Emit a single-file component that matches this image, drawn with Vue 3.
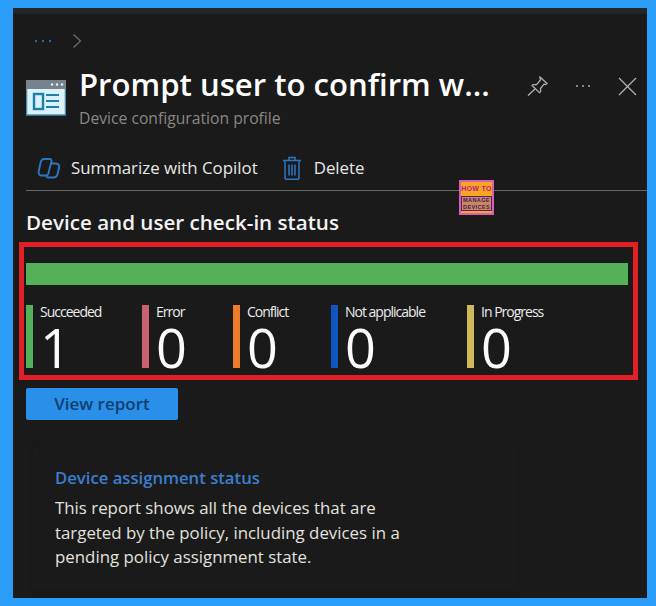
<script setup>
const stats = [
  { label: 'Succeeded', value: 1, color: '#55b05a', width: 116 },
  { label: 'Error', value: 0, color: '#c9616f', width: 91 },
  { label: 'Conflict', value: 0, color: '#ee7a2c', width: 98 },
  { label: 'Not applicable', value: 0, color: '#0f56c0', width: 136 },
  { label: 'In Progress', value: 0, color: '#d0b95a', width: 120 }
]
</script>

<template>
  <div class="page">
    <div class="panel">
      <div class="crumbs">
        <svg width="20" height="6" viewBox="0 0 20 6" fill="#2a6aa8"><circle cx="2" cy="3" r="1.200"/><circle cx="9" cy="3" r="1.200"/><circle cx="16" cy="3" r="1.200"/></svg>
        <svg class="chev" width="10" height="16" viewBox="0 0 10 16"><path d="M1.500 1.500 8.500 8l-7 6.500" fill="none" stroke="#6f6f6f" stroke-width="1.200"/></svg>
      </div>

      <div class="header">
        <svg class="app-icon" width="40" height="36" viewBox="0 0 40 36">
          <rect x="0.500" width="39" height="35" fill="#d9f2fb"/>
          <rect x="0.500" width="39" height="9" fill="#77838c"/>
          <path d="M.5 9v26h39V9" fill="none" stroke="#4f8fa8" stroke-width="1.600"/>
          <circle cx="26" cy="4.500" r="1.200" fill="#eee"/><circle cx="31" cy="4.500" r="1.200" fill="#eee"/><circle cx="36" cy="4.500" r="1.200" fill="#eee"/>
          <rect x="8" y="14" width="9" height="15" fill="none" stroke="#1f7fa8" stroke-width="2.400"/>
          <path d="M20 15h13M20 21h13M20 27h13" stroke="#1f7fa8" stroke-width="2"/>
        </svg>
        <div class="titles">
          <h1>Prompt user to confirm w...</h1>
          <p>Device configuration profile</p>
        </div>
        <div class="actions">
          <svg class="pin" width="21" height="20" viewBox="0 0 21 20" fill="none" stroke="#b4b4b4" stroke-width="1.200"><path d="M13 1 20 7.500 18.500 8.500l-1.500-.3-3.500 4.300.2 3-1.200 1.200L5 9.500l1.200-1 3.300.2L13.500 4l-.4-1.500z"/><path d="M8 13 1 19.500"/></svg>
          <svg class="more" width="16" height="4" viewBox="0 0 16 4" fill="#a8a8a8"><circle cx="2" cy="2" r="1"/><circle cx="8" cy="2" r="1"/><circle cx="14" cy="2" r="1"/></svg>
          <svg width="19" height="19" viewBox="0 0 19 19"><path d="M1 1l17 17M18 1 1 18" stroke="#b4b4b4" stroke-width="1.200"/></svg>
        </div>
      </div>

      <div class="commands">
        <button class="cmd" type="button">
          <svg width="24" height="24" viewBox="0 0 24 24" fill="none" stroke="#2a78c4" stroke-width="1.900">
            <path d="M7 3h5.500c1.500 0 2.300 1 1.900 2.400l-3 12c-.4 1.400-1.500 2.100-3 2.100H5c-2.500 0-3.900-1.800-3.300-4.200L3.500 7C4 4.600 5 3 7 3z"/>
            <path d="M13 7.500h5.500c2.800 0 4.200 1.800 3.600 4.300l-1.600 6.500c-.6 2.200-2 3.200-4 3.200h-5c-1.500 0-2.300-1-2-2.400"/>
          </svg>
          Summarize with Copilot
        </button>
        <button class="cmd trash" type="button">
          <svg width="18" height="24" viewBox="0 0 18 24" fill="none" stroke="#2a78c4" stroke-width="1.500">
            <path d="M0 4.500h18M6 4.500V1.500h6v3M2 4.500v17.500c0 .8.500 1.200 1.200 1.200h11.600c.7 0 1.200-.4 1.200-1.200V4.500"/>
            <path d="M6 8.500v11M9 8.500v11M12 8.500v11"/>
          </svg>
          Delete
        </button>
      </div>

      <div class="badge" aria-label="How to Manage Devices">
        <span class="how">HOW TO</span>
        <span class="manage">MANAGE<br>DEVICES</span>
      </div>

      <div class="content">
        <h2>Device and user check-in status</h2>

        <section class="status">
          <div class="bar"></div>
          <div class="stats">
            <div v-for="s in stats" :key="s.label" class="stat" :style="{ width: s.width + 'px' }">
              <span class="swatch" :style="{ background: s.color }"></span>
              <div class="stat-text">
                <span class="label">{{ s.label }}</span>
                <span class="value">{{ s.value }}</span>
              </div>
            </div>
          </div>
        </section>

        <button class="primary" type="button">View report</button>

        <article class="card">
          <h3>Device assignment status</h3>
          <p>This report shows all the devices that are targeted by the policy, including devices in a pending policy assignment state.</p>
        </article>
      </div>
    </div>
  </div>
</template>

<style>
html, body { margin: 0; background: #2a9df8; }
</style>

<style scoped>
.page {
  box-sizing: border-box;
  width: 656px;
  height: 606px;
  padding: 8px 9px 8px 13px;
  background: #2a9df8;
  font-family: "Open Sans", "Noto Sans", sans-serif;
  overflow: hidden;
}
.panel {
  position: relative;
  height: 590px;
  box-sizing: border-box;
  background: #1a1a1a;
  border-top: 6px solid #24252a;
  overflow: hidden;
}
.crumbs {
  height: 40px;
  padding: 19px 0 0 21px;
  box-sizing: border-box;
  display: flex;
  align-items: flex-start;
  gap: 18px;
}
.crumbs > svg:first-child { margin-top: 5px; }
.header {
  display: flex;
  height: 72px;
  padding: 20px 0 0 13px;
  box-sizing: border-box;
}
.app-icon { margin-top: 6px; flex: none; }
.titles { margin-left: 13px; width: 440px; margin-top: -10px; }
h1 {
  margin: 0;
  color: #fff;
  font-size: 31.100px;
  line-height: 40px;
  font-weight: 600;
  white-space: nowrap;
}
.titles p {
  margin: 4px 0 0;
  color: #8b8785;
  font-size: 15.700px;
  line-height: 20px;
  white-space: nowrap;
}
.actions {
  position: absolute;
  top: 63px;
  right: 10px;
  display: flex;
  align-items: center;
  gap: 27px;
}
.pin { margin-top: -2px; }
.more { margin-top: -1px; }
.commands {
  height: 65px;
  margin-left: 13px;
  padding: 20px 0 0 11px;
  box-sizing: border-box;
  display: flex;
  align-items: center;
  gap: 25px;
  border-bottom: 1px solid #666;
}
.cmd {
  display: flex;
  align-items: center;
  gap: 10px;
  padding: 0;
  border: 0;
  background: none;
  color: #e8e8e8;
  font: 400 16.850px/24px "Open Sans", "Noto Sans", sans-serif;
  white-space: nowrap;
}
.trash { gap: 13px; }
.badge {
  position: absolute;
  left: 446px;
  top: 166px;
  width: 35px;
  height: 35px;
  box-sizing: border-box;
  border: 2px solid #d65fb4;
  background: #f5a623;
  text-align: center;
  overflow: hidden;
  font-family: "Liberation Sans", sans-serif;
}
.how { display: block; color: #c2187f; font-size: 7px; line-height: 11px; font-weight: 700; letter-spacing: .3px; margin-top: 1px; }
.manage { display: block; margin-top: 2px; border: 1px solid #5a1a7a; background: #c98a5a; color: #4a1470; font-size: 5.500px; line-height: 6.500px; font-weight: 700; letter-spacing: .4px; white-space: nowrap; }
.content { padding: 0 0 0 13px; }
h2 {
  margin: 0;
  padding-top: 18px;
  color: #f2f2f2;
  font-size: 20.600px;
  line-height: 26px;
  font-weight: 600;
  white-space: nowrap;
}
.status {
  box-sizing: border-box;
  width: 619px;
  height: 138px;
  margin: 7px 0 0 -7px;
  padding: 16px 5px 0 2px;
  border: 5px solid #e21f26;
}
.bar { height: 22px; background: #55b05a; }
.stats { display: flex; margin-top: 20px; }
.stat { display: flex; flex: none; }
.swatch { width: 7px; height: 63px; flex: none; }
.stat-text { display: flex; flex-direction: column; margin-left: 7px; }
.label {
  height: 14px;
  color: #ececec;
  font-size: 14px;
  line-height: 14px;
  letter-spacing: -1px;
  white-space: nowrap;
}
.value {
  color: #fbfbfb;
  font-size: 54px;
  font-weight: 500;
  line-height: 44px;
  margin-top: 6px;
}
.primary {
  display: block;
  width: 152px;
  height: 32px;
  margin-top: 8px;
  padding: 0;
  border: 0;
  border-radius: 2px;
  background: #2a8fe8;
  color: #10406f;
  font: 600 17px/32px "Open Sans", "Noto Sans", sans-serif;
}
.card {
  box-sizing: border-box;
  width: 483px;
  height: 143px;
  margin: 27px 0 0 7px;
  padding: 19px 22px 0;
  background: #1a1a1a;
  box-shadow: 0 0 4px #161616;
}
h3 {
  margin: 0;
  color: #3a7fd0;
  font-size: 16.700px;
  line-height: 24px;
  font-weight: 600;
  white-space: nowrap;
}
.card p {
  margin: 6px 0 0;
  width: 365px;
  color: #e2e2de;
  font-size: 16.850px;
  line-height: 24.500px;
}
</style>
